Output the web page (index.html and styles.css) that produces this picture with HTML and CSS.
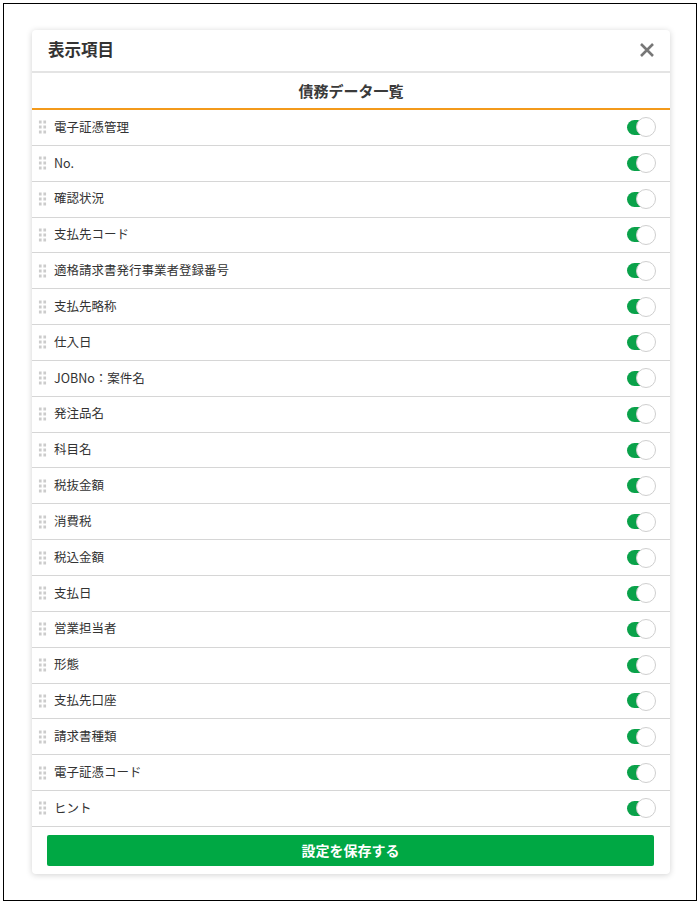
FILE: index.html
```html
<!DOCTYPE html>
<html lang="ja">
<head>
<meta charset="utf-8">
<title>表示項目</title>
<link rel="stylesheet" href="styles.css">
</head>
<body>
<div class="frame">
  <div class="modal">
    <div class="modal-header">
      <h1 class="modal-title">表示項目</h1>
      <button class="close" aria-label="閉じる">
        <svg width="16" height="16" viewBox="0 0 16 16"><path d="M2 2 L14 14 M14 2 L2 14" stroke="#777" stroke-width="2.6" stroke-linecap="butt" fill="none"/></svg>
      </button>
    </div>
    <div class="subheader">債務データ一覧</div>
    <ul class="list">
      <li class="row"><span class="handle"></span><span class="label">電子証憑管理</span><span class="toggle"><span class="track"></span><span class="knob"></span></span></li>
      <li class="row"><span class="handle"></span><span class="label">No.</span><span class="toggle"><span class="track"></span><span class="knob"></span></span></li>
      <li class="row"><span class="handle"></span><span class="label">確認状況</span><span class="toggle"><span class="track"></span><span class="knob"></span></span></li>
      <li class="row"><span class="handle"></span><span class="label">支払先コード</span><span class="toggle"><span class="track"></span><span class="knob"></span></span></li>
      <li class="row"><span class="handle"></span><span class="label">適格請求書発行事業者登録番号</span><span class="toggle"><span class="track"></span><span class="knob"></span></span></li>
      <li class="row"><span class="handle"></span><span class="label">支払先略称</span><span class="toggle"><span class="track"></span><span class="knob"></span></span></li>
      <li class="row"><span class="handle"></span><span class="label">仕入日</span><span class="toggle"><span class="track"></span><span class="knob"></span></span></li>
      <li class="row"><span class="handle"></span><span class="label">JOBNo：案件名</span><span class="toggle"><span class="track"></span><span class="knob"></span></span></li>
      <li class="row"><span class="handle"></span><span class="label">発注品名</span><span class="toggle"><span class="track"></span><span class="knob"></span></span></li>
      <li class="row"><span class="handle"></span><span class="label">科目名</span><span class="toggle"><span class="track"></span><span class="knob"></span></span></li>
      <li class="row"><span class="handle"></span><span class="label">税抜金額</span><span class="toggle"><span class="track"></span><span class="knob"></span></span></li>
      <li class="row"><span class="handle"></span><span class="label">消費税</span><span class="toggle"><span class="track"></span><span class="knob"></span></span></li>
      <li class="row"><span class="handle"></span><span class="label">税込金額</span><span class="toggle"><span class="track"></span><span class="knob"></span></span></li>
      <li class="row"><span class="handle"></span><span class="label">支払日</span><span class="toggle"><span class="track"></span><span class="knob"></span></span></li>
      <li class="row"><span class="handle"></span><span class="label">営業担当者</span><span class="toggle"><span class="track"></span><span class="knob"></span></span></li>
      <li class="row"><span class="handle"></span><span class="label">形態</span><span class="toggle"><span class="track"></span><span class="knob"></span></span></li>
      <li class="row"><span class="handle"></span><span class="label">支払先口座</span><span class="toggle"><span class="track"></span><span class="knob"></span></span></li>
      <li class="row"><span class="handle"></span><span class="label">請求書種類</span><span class="toggle"><span class="track"></span><span class="knob"></span></span></li>
      <li class="row"><span class="handle"></span><span class="label">電子証憑コード</span><span class="toggle"><span class="track"></span><span class="knob"></span></span></li>
      <li class="row"><span class="handle"></span><span class="label">ヒント</span><span class="toggle"><span class="track"></span><span class="knob"></span></span></li>
    </ul>
    <div class="modal-footer">
      <button class="save">設定を保存する</button>
    </div>
  </div>
</div>
</body>
</html>
```

FILE: styles.css
```css
* { box-sizing: border-box; }

html, body {
  margin: 0;
  padding: 0;
  background: #fff;
}

body {
  font-family: "Noto Sans CJK JP", "Noto Sans", sans-serif;
  color: #333;
}

.frame {
  margin: 3px 0 0 3px;
  width: 694px;
  height: 898px;
  border: 1px solid #000;
  padding: 26px 0 0 28px;
}

.modal {
  width: 638px;
  background: #fff;
  border-radius: 4px;
  box-shadow: 0 1px 6px rgba(0, 0, 0, 0.18);
  overflow: hidden;
}

.modal-header {
  height: 43px;
  display: flex;
  align-items: center;
  justify-content: space-between;
  padding: 0 15px 2px 16px;
  border-bottom: 2px solid #e4e4e4;
}

.modal-title {
  margin: 0;
  font-size: 16.5px;
  font-weight: 700;
  color: #333;
  line-height: 1;
}

.close {
  border: 0;
  background: none;
  padding: 0;
  width: 16px;
  height: 16px;
  display: flex;
}

.subheader {
  height: 37px;
  display: flex;
  align-items: center;
  justify-content: center;
  font-size: 15px;
  font-weight: 700;
  color: #3a3a3a;
  border-bottom: 2px solid #f39a1b;
}

.list {
  list-style: none;
  margin: 0;
  padding: 0;
}

.row {
  height: 35.85px;
  display: flex;
  align-items: center;
  padding: 0 14px 0 6px;
  border-bottom: 1px solid #d6d6d6;
}

.handle {
  width: 9px;
  height: 14px;
  margin-right: 7px;
  background-image: radial-gradient(circle, #cccccc 1.5px, transparent 1.7px);
  background-size: 4.5px 5px;
  background-position: 0 -0.5px;
  flex: none;
}

.label {
  flex: 1;
  font-size: 12.5px;
  color: #333;
  line-height: 1;
  padding-bottom: 1px;
}

.toggle {
  display: flex;
  align-items: center;
  flex: none;
  height: 20px;
}

.track {
  width: 20px;
  height: 15px;
  border-radius: 8px 0 0 8px;
  background: #0aa24a;
}

.knob {
  width: 20px;
  height: 20px;
  margin-left: -11px;
  border-radius: 50%;
  background: #fff;
  border: 1px solid #cfcfcf;
}

.modal-footer {
  padding: 8px 16px 8px 15px;
}

.save {
  width: 100%;
  height: 31px;
  border: 0;
  border-radius: 2px;
  background: #00a844;
  color: #fff;
  font-family: "Noto Sans CJK JP", sans-serif;
  font-size: 14px;
  font-weight: 700;
  display: flex;
  align-items: center;
  justify-content: center;
  padding: 0;
}
```
